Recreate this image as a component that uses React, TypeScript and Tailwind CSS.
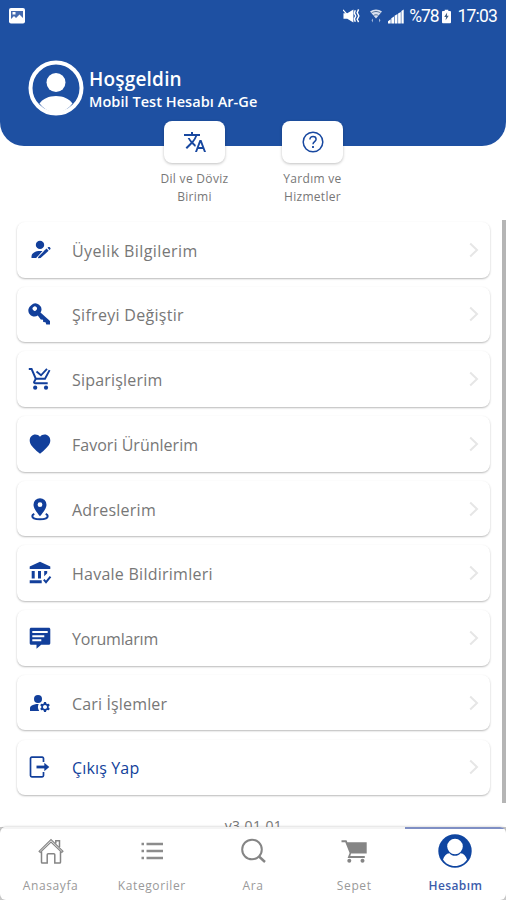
import type { ReactNode } from 'react';
import { MdManageAccounts, MdTranslate } from 'react-icons/md';

type MenuItem = {
    label: string;
    icon: ReactNode;
    tracking: string;
    active?: boolean;
};

const MemberIcon = () => (
    <svg className="w-6 h-6" viewBox="0 0 24 24" fill="currentColor">
        <circle cx="12" cy="6.900" r="4.200" />
        <path d="M3.500 20v-1.500c0-3.300 3.600-5.700 9.500-5.500h1.500L8.300 20z" />
        <path d="M10 20.300l.3-2.400 8.300-7.400 2 2.200-8 7.400zM19.500 9.800l.9-.7c.4-.3.9-.3 1.200 0l.8.900c.3.400.3.900-.1 1.200l-.9.800z" />
        <path d="M8.300 20.500l7-7.200" fill="none" stroke="white" strokeWidth="0.800" />
    </svg>
);

const KeyIcon = () => (
    <svg className="w-6 h-6" viewBox="0 0 24 24" fill="currentColor">
        <path
            fillRule="evenodd"
            d="M3.200 3.200a6 6 0 0 1 9.300 7.400l9.500 8.400V22.500h-3.700l-.8-2.200-2.300-.2-.2-2.400-2.200-.2-3-3.900a6 6 0 0 1-6.600-10.400zM5.400 4.900a2.200 2.200 0 1 0 3 3.200 2.200 2.200 0 0 0-3-3.200z"
        />
    </svg>
);

const OrderIcon = () => (
    <svg className="w-6 h-6" viewBox="0 0 24 24" fill="none" stroke="currentColor" strokeWidth="1.900">
        <path d="M.8 2H3.600l4.200 9.700h9.200l4.600-8.600" />
        <path d="M7.800 11.700L6.100 15c-.3.600.1 1.200.8 1.200h12.800" />
        <path d="M8.500 4.600l4.500 3.700 6-6.500" />
        <g fill="currentColor" stroke="none">
            <circle cx="7.200" cy="20.700" r="2.100" />
            <circle cx="18" cy="20.700" r="2.100" />
        </g>
    </svg>
);

const HeartIcon = () => (
    <svg className="w-6 h-6" viewBox="0 0 24 24" fill="currentColor">
        <path d="M12 21.800l-1.500-1.300C5.200 15.700 1.700 12.600 1.700 8.400 1.700 5.100 4.200 2.500 7.400 2.500c1.800 0 3.500.8 4.600 2.200 1.100-1.400 2.800-2.200 4.600-2.200 3.200 0 5.700 2.600 5.700 5.900 0 4.200-3.500 7.300-8.800 12.100z" />
    </svg>
);

const AddressIcon = () => (
    <svg className="w-6 h-6" viewBox="0 0 24 24" fill="currentColor">
        <path
            fillRule="evenodd"
            d="M12 1.200a6.500 6.500 0 0 0-6.500 6.500C5.500 12.400 12 19.200 12 19.200s6.500-6.800 6.500-11.500A6.500 6.500 0 0 0 12 1.200zm0 4.100a2.400 2.400 0 1 1 0 4.800 2.400 2.400 0 0 1 0-4.800z"
        />
        <path
            d="M6.300 16.800c-1.300.6-2 1.300-2 2.200 0 2 3.400 3.300 7.700 3.300s7.700-1.300 7.700-3.300c0-.9-.7-1.600-2-2.200"
            fill="none"
            stroke="currentColor"
            strokeWidth="2"
        />
    </svg>
);

const BankIcon = () => (
    <svg className="w-6 h-6" viewBox="0 0 24 24" fill="currentColor">
        <path d="M12 .8L1.700 5.500V8h20.600V5.500zM3.700 10h3v7.500h-3zM10 10h3v7.500h-3zM16.200 10h3v2.200l-3 3zM1.700 19.300h12v3h-12z" />
        <path d="M15.800 18.600l2.200 2.500 4.500-5.500" fill="none" stroke="currentColor" strokeWidth="2" />
    </svg>
);

const CommentIcon = () => (
    <svg className="w-6 h-6" viewBox="0 0 24 24" fill="currentColor">
        <path
            fillRule="evenodd"
            d="M3.200 1.700h17.600c.8 0 1.500.7 1.500 1.500v14c0 .8-.7 1.500-1.500 1.500h-7.600l-4.700 4v-4H3.200c-.8 0-1.500-.7-1.500-1.500v-14c0-.8.7-1.500 1.500-1.500zM4.300 5v2h15.400V5zM4.300 9.200v2h12v-2zM4.300 13.200v2h9v-2z"
        />
    </svg>
);

const LogoutIcon = () => (
    <svg className="w-6 h-6" viewBox="0 0 24 24" fill="none" stroke="currentColor" strokeWidth="1.700">
        <path d="M15.500 7V3.500c0-.8-.5-1.300-1.300-1.300H3.800c-.8 0-1.300.5-1.300 1.300v17c0 .8.5 1.300 1.300 1.300h10.400c.8 0 1.300-.5 1.300-1.300V17" />
        <path d="M8.500 12H18" strokeWidth="2.800" />
        <path d="M16.300 7.800L21.300 12l-5 4.200z" fill="currentColor" stroke="none" />
    </svg>
);

const HelpIcon = () => (
    <svg className="w-6 h-6" viewBox="0 0 24 24" fill="none" stroke="currentColor" strokeWidth="1.500">
        <circle cx="12" cy="12" r="9.800" />
        <path d="M8.900 9.600c0-1.900 1.300-3.100 3.100-3.100s3.100 1.100 3.100 2.700c0 2.300-3.100 2.500-3.100 5" />
        <path d="M12 16v1.900" strokeWidth="1.800" />
    </svg>
);

const ChevronIcon = () => (
    <svg className="w-2.5 h-4" viewBox="0 0 10 16" fill="none" stroke="#e6e6e6" strokeWidth="2">
        <path d="M1.200 1.500L8 8l-6.800 6.500" />
    </svg>
);

const AvatarIcon = () => (
    <svg className="w-14 h-14 shrink-0" viewBox="0 0 56 56">
        <circle cx="28" cy="28" r="25.500" fill="none" stroke="white" strokeWidth="4" />
        <circle cx="28" cy="22.500" r="9.500" fill="white" />
        <path d="M11.500 43.500C15 38.700 21 36 28 36s13 2.700 16.500 7.500A24 24 0 0 1 28 53a24 24 0 0 1-16.500-9.500z" fill="white" />
    </svg>
);

const menuItems: MenuItem[] = [
    { label: 'Üyelik Bilgilerim', icon: <MemberIcon />, tracking: 'tracking-[0.4px]' },
    { label: 'Şifreyi Değiştir', icon: <KeyIcon />, tracking: 'tracking-[0.3px]' },
    { label: 'Siparişlerim', icon: <OrderIcon />, tracking: 'tracking-[0.2px]' },
    { label: 'Favori Ürünlerim', icon: <HeartIcon />, tracking: 'tracking-[0.02px]' },
    { label: 'Adreslerim', icon: <AddressIcon />, tracking: 'tracking-[0.25px]' },
    { label: 'Havale Bildirimleri', icon: <BankIcon />, tracking: 'tracking-[0.25px]' },
    { label: 'Yorumlarım', icon: <CommentIcon />, tracking: 'tracking-[-0.2px]' },
    { label: 'Cari İşlemler', icon: <MdManageAccounts className="w-6 h-6" />, tracking: 'tracking-[0.15px]' },
    { label: 'Çıkış Yap', icon: <LogoutIcon />, tracking: 'tracking-[0.15px]', active: true },
];

const tabs: { label: string; icon: ReactNode; active?: boolean }[] = [
    {
        label: 'Anasayfa',
        icon: (
            <svg className="w-7 h-7" viewBox="0 0 28 28" fill="none" stroke="#858585" strokeWidth="1.500">
                <path d="M2 14.300L14 2.500l12 11.800-1.200 1.200L14 5 3.200 15.500z" strokeWidth="1.100" />
                <path d="M4.500 14.500v10.700c0 .6.300.9.900.9h4.800v-8.300c0-.7.3-1 1-1h5.600c.7 0 1 .3 1 1v8.300h4.800c.6 0 .9-.3.900-.9V14.500M18.800 6.500V3.800h3.700v6.300" />
            </svg>
        ),
    },
    {
        label: 'Kategoriler',
        icon: (
            <svg className="w-7 h-7" viewBox="0 0 28 28" stroke="#8c8c8c" strokeWidth="2.400">
                <path d="M3.500 7h2.500M3.500 14h2.500M3.500 21h2.500M8.500 7h16.500M8.500 14h16.500M8.500 21h16.500" />
            </svg>
        ),
    },
    {
        label: 'Ara',
        icon: (
            <svg className="w-7 h-7" viewBox="0 0 28 28" fill="none" stroke="#858585" strokeWidth="2">
                <circle cx="13" cy="12.500" r="9.800" />
                <path d="M20 19.500l6 5.500" strokeWidth="2.400" />
            </svg>
        ),
    },
    {
        label: 'Sepet',
        icon: (
            <svg className="w-7 h-7" viewBox="0 0 28 28" fill="#858585">
                <path d="M1.500 3.300h5l.9 2h19.300v11.300H11l-.7 2.500h14.500v2H7.600l2-5L5.300 5.300H1.500z" />
                <circle cx="9.300" cy="23.700" r="2" />
                <circle cx="22.500" cy="23.700" r="2" />
            </svg>
        ),
    },
    {
        label: 'Hesabım',
        active: true,
        icon: (
            <svg className="w-[34px] h-[34px]" viewBox="0 0 34 34">
                <circle cx="17" cy="17" r="16.700" fill="#0f45a0" />
                <circle cx="17" cy="12.500" r="7.800" fill="white" />
                <path d="M5 25.500c1-3.500 3.200-6 6.500-6.300 1.500 1.800 3.300 2.600 5.500 2.600s4-.8 5.500-2.600c3.300.3 5.500 2.800 6.500 6.300-2.600 4.200-7 6.500-12 6.500S7.600 29.700 5 25.500z" fill="white" />
            </svg>
        ),
    },
];

const StatusBar = () => (
    <div className="h-8 pl-[9px] pr-[9px] flex items-center justify-between text-white">
        <svg className="w-4 h-4" viewBox="0 0 16 16">
            <rect width="16" height="15.500" rx="2" fill="white" />
            <path d="M2 3h12v7l-3.500-3.500L7 10 5 8l-3 3z" fill="#456baf" />
            <path d="M3.500 4h3v2.500h-3z" fill="white" />
        </svg>
        <div className="flex items-center font-[Roboto,sans-serif] text-[17.5px]">
            <svg className="w-[17px] h-4" viewBox="0 0 18 16" fill="white">
                <path d="M.5 5h4L11 1v14L4.500 11H.5z" />
                <path d="M0 1.500l5 5.500" stroke="white" strokeWidth="1.300" />
                <path d="M13 2l-1 3 1.500 3-1.500 3 1 3M16.500 1l-1.500 3.500L16.800 8 15 11.500l1.500 3" fill="none" stroke="white" strokeWidth="1.500" />
            </svg>
            <svg className="ml-[10px] w-3 h-4" viewBox="0 0 12 16">
                <path d="M0 3.500C3.500.7 8.500.7 12 3.500L6 10.500z" fill="#d8e0f0" />
                <path d="M1.500 5c3-2 6-2 9 0M3.500 7.500c1.700-1 3.300-1 5 0" fill="none" stroke="#56749b" strokeWidth="1" />
                <path d="M1.500 12.300L3 10.500v4zM10.500 12.300L9 10.500v4z" fill="#9fb5da" />
            </svg>
            <svg className="ml-[6px] w-4 h-[15px]" viewBox="0 0 16 15" fill="white">
                <path d="M0 14.500v-2.300l2.700-2v4.300zM3.300 14.500V9.200L6 7.500v7zM6.600 14.500V6.700L9.500 5v9.500zM10.100 14.500v-10l2.700-1.500v11.500zM13.400 14.500V2L15.700.5v14z" />
            </svg>
            <span className="ml-[5px] tracking-[-1.1px]">%78</span>
            <svg className="ml-[4px] w-[9px] h-[15px]" viewBox="0 0 10 15">
                <path d="M3 0h4v1.500h1.700c.6 0 1.300.4 1.300 1V14c0 .6-.4 1-1 1H1c-.6 0-1-.4-1-1V2.500c0-.6.500-1 1.200-1H3z" fill="white" />
                <path d="M5.700 3L2.500 8h2L4 11.800 7.500 6.800h-2z" fill="#3f5f83" />
            </svg>
            <span className="ml-[6px] tracking-[-0.8px]">17:03</span>
        </div>
    </div>
);

const QuickAction = ({ icon, children }: { icon: ReactNode; children: ReactNode }) => (
    <div className="w-[118px] flex flex-col items-center">
        <div className="w-[61px] h-[42px] flex items-center justify-center rounded-lg bg-white text-[#1848a0] shadow-[0_1px_3px_rgba(0,0,0,0.25)]">
            {icon}
        </div>
        <p className="mt-[7px] text-center text-[12px] leading-[17.5px] tracking-[0.3px] font-medium text-[#777777]">{children}</p>
    </div>
);

export default function App() {
    return (
        <div className="w-full h-[900px] flex flex-col overflow-hidden bg-white font-['Open_Sans','Noto_Sans',sans-serif]">
            {/* Header */}
            <header className="h-[146px] shrink-0 rounded-b-[24px] bg-[#1e50a2]">
                <StatusBar />
                <div className="mt-7 ml-7 flex items-center text-white">
                    <AvatarIcon />
                    <div className="ml-[5px] mt-[3px]">
                        <h1 className="text-[19px] leading-6 tracking-[0.2px] font-semibold">Hoşgeldin</h1>
                        <p className="text-[14.5px] leading-[22px] tracking-[0.05px] font-semibold whitespace-nowrap">Mobil Test Hesabı Ar-Ge</p>
                    </div>
                </div>
            </header>

            {/* Shortcuts */}
            <div className="h-[99px] -mt-[25px] pl-[1px] shrink-0 flex justify-center">
                <QuickAction icon={<MdTranslate className="w-6 h-6" />}>
                    Dil ve Döviz
                    <br />
                    Birimi
                </QuickAction>
                <QuickAction icon={<HelpIcon />}>
                    Yardım ve
                    <br />
                    Hizmetler
                </QuickAction>
            </div>

            {/* Account menu */}
            <main className="h-[607px] shrink-0 flex overflow-hidden">
                <div className="flex-1 pt-0.5 pl-[17px] pr-3">
                    <ul className="flex flex-col gap-[9.2px]">
                        {menuItems.map((item) => (
                            <li
                                key={item.label}
                                className="h-[55.5px] pl-[11px] pr-[11px] flex items-center rounded-lg bg-white shadow-[0_1px_2px_rgba(0,0,0,0.28)]"
                            >
                                <span className="text-[#123f9b]">{item.icon}</span>
                                <span
                                    className={`ml-5 pt-0.5 flex-1 text-base whitespace-nowrap ${item.tracking} ${item.active ? 'font-medium text-[#123f9b]' : 'text-[#777777]'}`}
                                >
                                    {item.label}
                                </span>
                                <ChevronIcon />
                            </li>
                        ))}
                    </ul>
                    <p className="mt-[21px] text-center text-[14px] leading-5 tracking-[0.4px] text-[#777777]">v3.01.01</p>
                </div>
                <div className="w-1 h-[583px] bg-[#b5b5b5]" />
            </main>

            {/* Tab bar */}
            <div className="flex-1 bg-[#c8c8c8]">
                <nav className="h-full flex overflow-hidden rounded-[6px] bg-white shadow-[0_-1px_2px_rgba(0,0,0,0.12)]">
                    {tabs.map((tab) => (
                        <div
                            key={tab.label}
                            className={`flex-1 flex flex-col items-center border-t-2 ${tab.active ? 'border-[#7f8fc4]' : 'border-[#f4f4f4]'}`}
                        >
                            <div className="mt-[4px] h-[35px] flex items-center justify-center">{tab.icon}</div>
                            <span
                                className={`mt-[10px] text-[12px] leading-4 ${tab.active ? 'tracking-[0.4px] font-semibold text-[#3c5cab]' : 'tracking-[0.6px] text-[#999999]'}`}
                            >
                                {tab.label}
                            </span>
                        </div>
                    ))}
                </nav>
            </div>
        </div>
    );
}
